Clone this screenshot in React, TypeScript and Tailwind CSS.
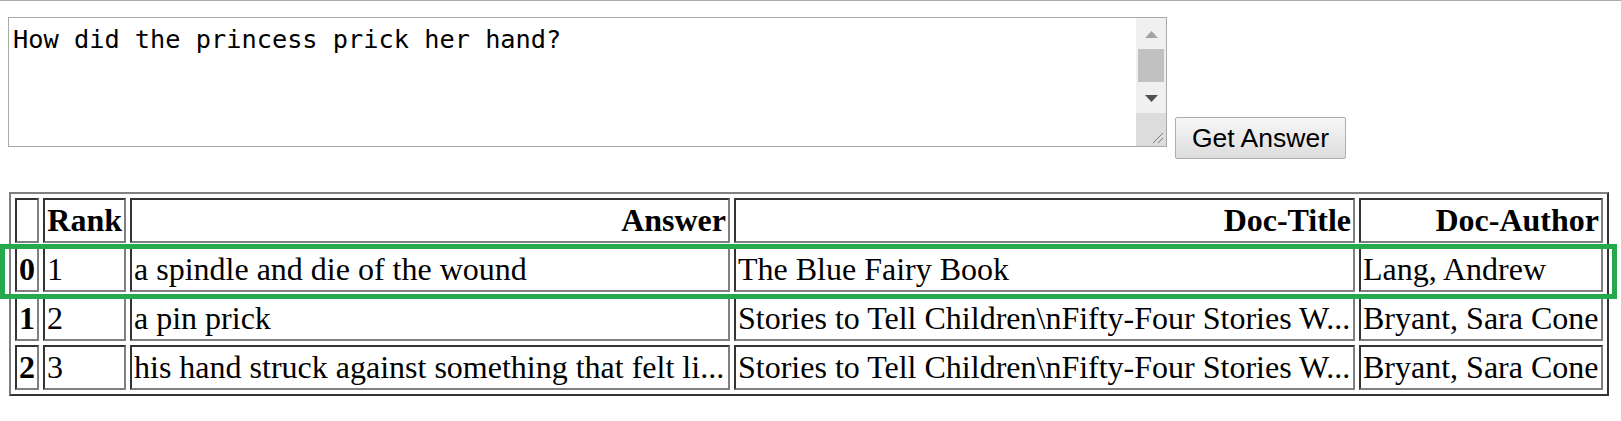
import React from "react";

type Row = { idx: string; rank: string; answer: string; title: string; author: string };

const rows: Row[] = [
  { idx: "0", rank: "1", answer: "a spindle and die of the wound", title: "The Blue Fairy Book", author: "Lang, Andrew" },
  { idx: "1", rank: "2", answer: "a pin prick", title: "Stories to Tell Children\\nFifty-Four Stories W...", author: "Bryant, Sara Cone" },
  { idx: "2", rank: "3", answer: "his hand struck against something that felt li...", title: "Stories to Tell Children\\nFifty-Four Stories W...", author: "Bryant, Sara Cone" },
];

const cell =
  "border-2 border-t-[#333333] border-l-[#333333] border-b-[#808080] border-r-[#808080] p-[2px] whitespace-nowrap overflow-hidden";

export default function App() {
  return (
    <div className="relative min-h-[421px] w-full bg-white border-t border-[#a9a9a9]">
      <div className="flex items-start pl-[8px] pt-[16px]">
        <div className="flex h-[130px] w-[1159px] border border-[#a9a9a9] bg-white">
          <textarea
            readOnly
            defaultValue="How did the princess prick her hand?"
            className="flex-1 resize-none overflow-hidden border-0 bg-white pl-[4px] pt-[7px] font-['DejaVu_Sans_Mono',monospace] text-[25.3px] leading-[29px] text-black outline-none"
          />
          <div className="flex w-[30px] flex-col bg-[#f0f0f0]">
            <div className="flex h-[30px] items-center justify-center pt-[2px]">
              <svg width="13" height="7" viewBox="0 0 13 7">
                <polygon points="0,7 6.5,0 13,7" fill="#a3a3a3" />
              </svg>
            </div>
            <div className="mx-[2px] mt-[1px] h-[33px] bg-[#c1c1c1]" />
            <div className="flex h-[31px] items-center justify-center pt-[2px]">
              <svg width="13" height="7" viewBox="0 0 13 7">
                <polygon points="0,0 13,0 6.5,7" fill="#505050" />
              </svg>
            </div>
            <div className="relative flex-1 bg-[#dcdcdc]">
              <svg className="absolute bottom-[2px] right-[2px]" width="14" height="14" viewBox="0 0 14 14">
                <line x1="13" y1="3" x2="3" y2="13" stroke="#7a7a7a" strokeWidth="1" />
                <line x1="13" y1="8" x2="8" y2="13" stroke="#7a7a7a" strokeWidth="1" />
              </svg>
            </div>
          </div>
        </div>
        <button className="ml-[8px] mt-[100px] h-[42px] w-[171px] rounded-[2px] border border-[#adadad] bg-gradient-to-b from-[#f7f7f7] to-[#dddddd] font-['Liberation_Sans',Arial,sans-serif] text-[26.5px] leading-[30px] text-black">
          Get Answer
        </button>
      </div>

      <table className="ml-[9px] mt-[33px] w-[1600px] table-fixed border-separate border-spacing-[4px] border-2 border-t-[#808080] border-l-[#808080] border-b-[#333333] border-r-[#333333] font-['Liberation_Serif','Times_New_Roman',serif] text-[32px] leading-[37px] text-black">
        <thead>
          <tr className="text-right">
            <th className={`${cell} w-[24px]`}></th>
            <th className={`${cell} w-[83px] font-bold`}>Rank</th>
            <th className={`${cell} w-[600px] font-bold`}>Answer</th>
            <th className={`${cell} w-[621px] font-bold`}>Doc-Title</th>
            <th className={`${cell} w-[244px] font-bold`}>Doc-Author</th>
          </tr>
        </thead>
        <tbody>
          {rows.map((r) => (
            <tr key={r.idx}>
              <th className={`${cell} text-left font-bold`}>{r.idx}</th>
              <td className={`${cell} text-left`}>{r.rank}</td>
              <td className={`${cell} text-left`}>{r.answer}</td>
              <td className={`${cell} text-left`}>{r.title}</td>
              <td className={`${cell} text-left`}>{r.author}</td>
            </tr>
          ))}
        </tbody>
      </table>

      <div className="pointer-events-none absolute left-0 top-[243px] h-[55px] w-[1617px] border-[5px] border-[#25a94d]" />
    </div>
  );
}
